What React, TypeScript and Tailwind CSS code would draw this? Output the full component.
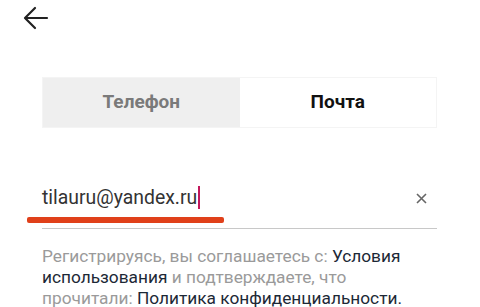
import { useState } from "react";

const App = () => {
	const [tab, setTab] = useState<"phone" | "mail">("mail");
	const [email, setEmail] = useState("tilauru@yandex.ru");

	return (
		<div className="w-[480px] h-[307px] overflow-hidden bg-white font-['Roboto',sans-serif]">
			<div className="pl-[23px] pt-[6px] h-[77px]">
				<svg width="26" height="24" viewBox="0 0 26 24" fill="none">
					<path
						d="M24 12H3M12 2L2 12l10 10"
						stroke="#222"
						strokeWidth="2.2"
						strokeLinecap="round"
						strokeLinejoin="round"
					/>
				</svg>
			</div>

			<div className="mx-[42px] w-[395px] h-[51px] flex bg-[#efefef] border border-[#f4f4f4]">
				<button
					onClick={() => setTab("phone")}
					className={`flex-1 text-[19px] font-bold ${tab === "phone" ? "bg-white text-[#111]" : "text-[#7a7a7a]"}`}
				>
					Телефон
				</button>
				<button
					onClick={() => setTab("mail")}
					className={`flex-1 text-[19px] font-bold ${tab === "mail" ? "bg-white text-[#111]" : "text-[#7a7a7a]"}`}
				>
					Почта
				</button>
			</div>

			<div className="mt-[53px] relative">
				<div className="mx-[42px] w-[395px] flex items-center h-[34px]">
					<div className="flex items-center flex-1">
						<span className="text-[19.4px] text-[#333]">{email}</span>
						<span className="w-[2px] h-[23px] bg-[#c2185b] ml-[1px]" />
					</div>
					<button onClick={() => setEmail("")} className="mr-[10px] text-[#666]">
						<svg width="11" height="11" viewBox="0 0 11 11">
							<path d="M1 1l9 9M10 1l-9 9" stroke="#666" strokeWidth="1.6" />
						</svg>
					</button>
				</div>
				<div className="absolute left-[27px] top-[36px] w-[197px] h-[6px] bg-[#e0401a] rounded-[2px]" />
				<div className="mx-[42px] w-[395px] mt-[13px] h-[1px] bg-[#c8c8c8]" />
			</div>

			<p className="mx-[42px] mt-[17px] w-[420px] text-[17.3px] leading-[21px] text-[#9a9a9a]">
				Регистрируясь, вы соглашаетесь с:{" "}
				<span className="text-[#1c2836]">Условия</span>
				<br />
				<span className="text-[#1c2836]">использования</span> и подтверждаете, что
				<br />
				прочитали: <span className="text-[#1c2836]">Политика конфиденциальности.</span>
			</p>
		</div>
	);
};

export default App;
